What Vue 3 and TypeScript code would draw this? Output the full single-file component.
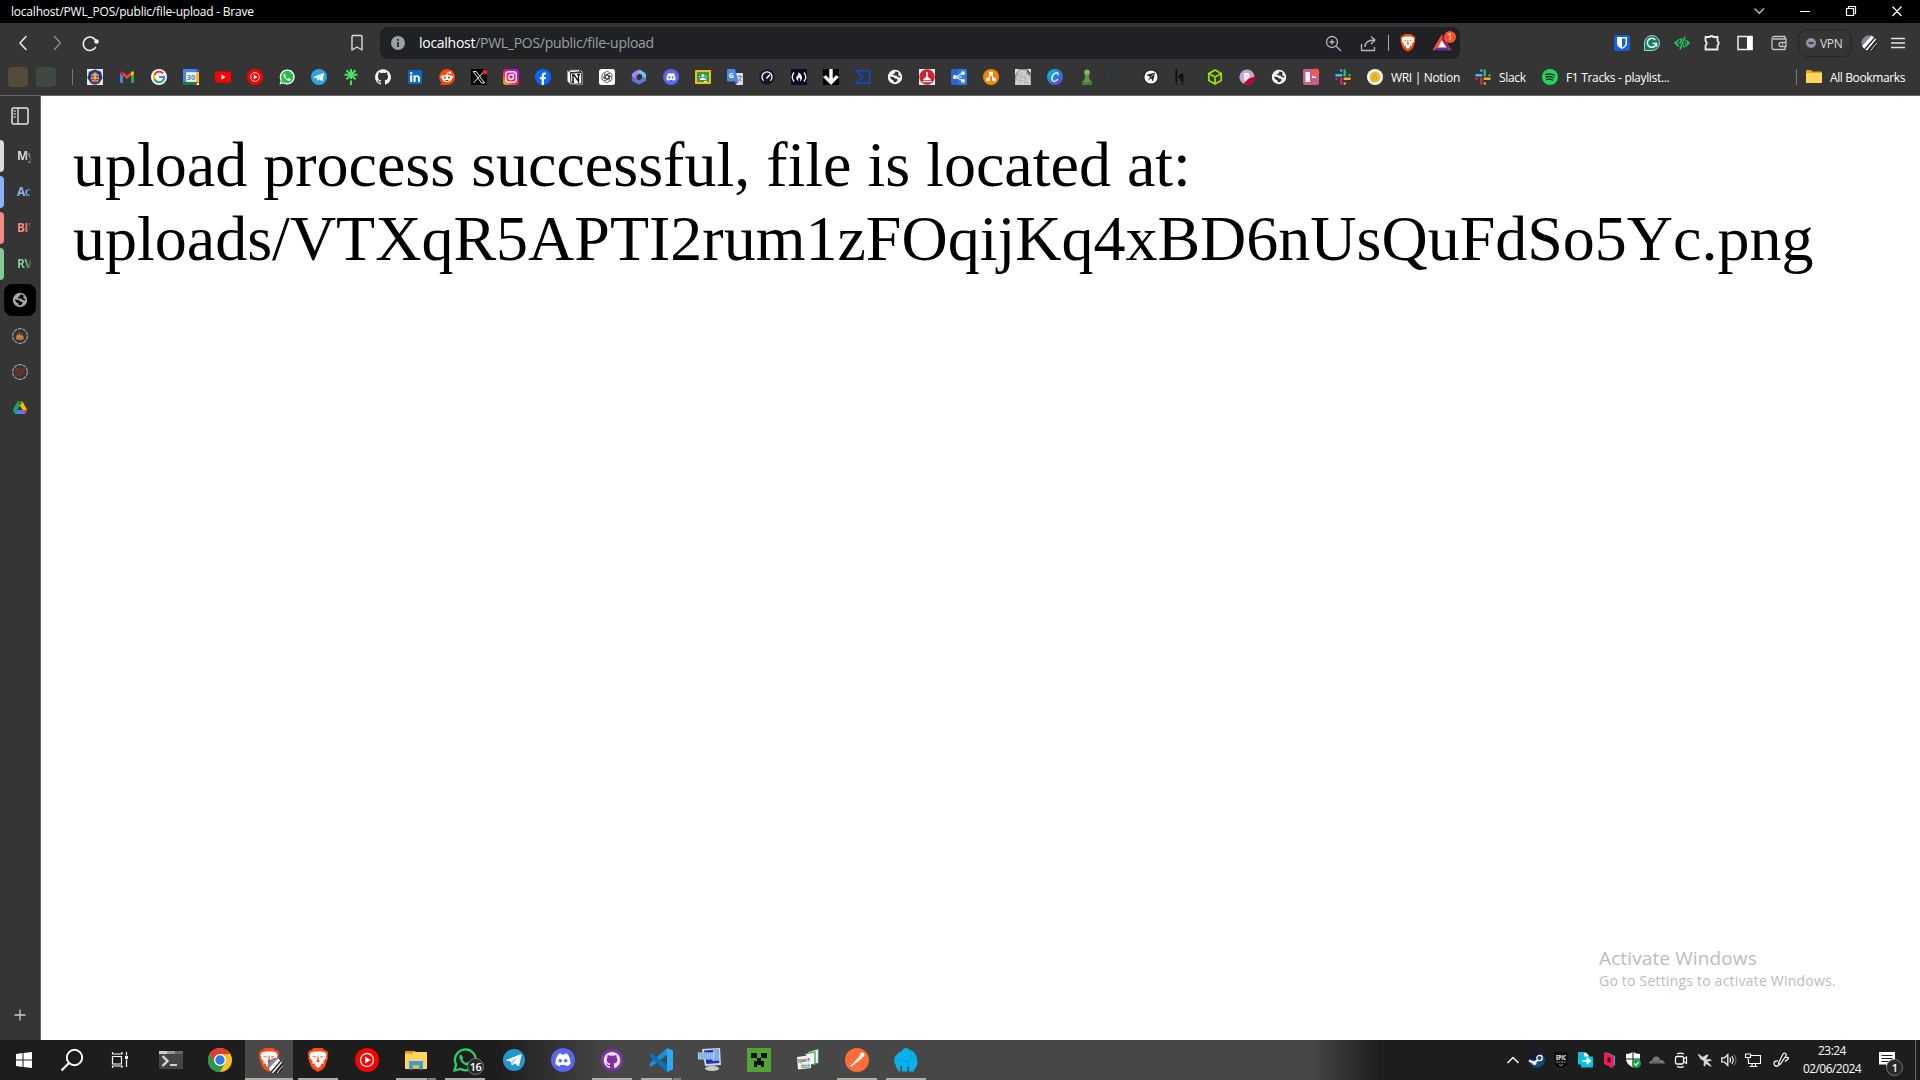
<script setup lang="ts">
interface Glyph { name: string; art: string; label?: string; width?: number }
interface App extends Glyph { state?: 'open' | 'active' | 'stacked'; badge?: string }

const lion = `<path d="M7.500 0h9L19 2.500l1.500-.3L22.300 5l-.8 3 .5 2-3 8.500-2 2.500-5 3-5-3-2-2.500L2 10l.5-2-.8-3 1.800-2.800L5 2.500Z" fill="#fb4a12"/><path d="M8.500 3.500h7l3.500.8 1.700 3-.8 1.200.4 1.300-3 3.700.5 2-3 .3.300 1.700-3.100 2.500-3.100-2.500.3-1.700-3-.3.5-2-3-3.700.4-1.300-.8-1.200 1.700-3Z" fill="#fff"/><path d="m5.800 8 4 .4-.5 1.300ZM18.200 8l-4 .4.500 1.300ZM11.600 7.500h.8l.3 4.500 1.300 1.200-2 1.300-2-1.300 1.300-1.200Z" fill="#fb4a12"/>`
const play = `<circle cx="12" cy="12" r="12" fill="#f00"/><circle cx="12" cy="12" r="6.500" fill="none" stroke="#fff" stroke-width="1.300"/><path d="M10 8.500 15.800 12 10 15.500Z" fill="#fff"/>`
const plane = `<path d="M4.500 11.800 18.500 6.200c.7-.2 1.100.2 1 .9L17.200 17.500c-.2.8-.7.9-1.200.6l-3.500-2.600-1.800 1.700c-.3.300-.8.200-.9-.2l-.9-3.300-4.300-1.100c-.6-.2-.6-.6-.1-.8Z" fill="#fff"/><path d="m9.500 13.500 7-5.300-5.400 6.200-.7 2.200Z" fill="#8cc6e6"/>`
const discord = `<path d="M8.300 6.500A14 14 0 0 1 10 6l.6 1a9 9 0 0 1 2.800 0L14 6q1 .1 1.900.5Q18.500 10.200 18.300 15q-1.800 1.500-3.500 1.800l-.9-1.300a8 8 0 0 1-3.800 0l-.9 1.300Q7.400 16.500 5.700 15 5.400 10.200 8.300 6.500Z" fill="#fff"/><circle cx="9.700" cy="12.200" r="1.500" fill="#5865f2"/><circle cx="14.300" cy="12.200" r="1.500" fill="#5865f2"/>`
const cat = `M8 .2a7.900 7.900 0 0 0-2.500 15.400c.4.1.5-.2.500-.4v-1.500c-2.200.5-2.700-1-2.700-1-.4-.9-.9-1.200-.9-1.200-.7-.5.100-.5.100-.5.800.1 1.200.8 1.200.8.700 1.200 1.900.9 2.300.7 0-.5.300-.9.500-1.100-1.800-.2-3.600-.9-3.600-4 0-.9.300-1.600.8-2.100-.1-.2-.4-1 .1-2.100 0 0 .7-.2 2.200.8a7.500 7.500 0 0 1 4 0c1.500-1 2.200-.8 2.200-.8.400 1.100.2 1.900.1 2.100.5.500.8 1.200.8 2.100 0 3.100-1.900 3.700-3.600 3.900.3.300.5.700.5 1.500v2.400c0 .2.100.5.500.4A7.900 7.900 0 0 0 8 .2Z`
const phone = `<path d="M5.500 4.400c-.7.300-1.300 1.200-1 2.400.6 2.300 2.700 4.300 4.900 4.900 1.200.2 2.200-.4 2.300-1.500L9.600 9.100l-.9.900c-1.100-.4-2.200-1.400-2.700-2.600l.8-.9Z" fill="#fff"/>`
const globe = (c: string, d: string) => `<circle cx="8" cy="8" r="7.200" fill="${c}"/><path d="M8.300 2.500c1.800 0 3 .6 4 1.700L11 4.800l.6 1.600 1.900.9v1.200L10.700 8 9.200 6.400H6.800L5.500 5.200l2.200-.7ZM2.600 7.500l3.900.4 1.700 1.700 2.300.4-.3 2-1.600 1.300H6.700l-.2-1.900-2-1Z" fill="${d}"/>`
const hash = `<g stroke-linecap="round" stroke-width="2.500" fill="none"><path d="M6.200 1.500v0M1.500 6.200h4.700" stroke="#36c5f0"/><path d="M9.700 1.500v4.700M14.500 6.200v0" stroke="#2eb67d"/><path d="M14.500 9.700H9.700M9.700 14.500v0" stroke="#ecb22e"/><path d="M6.200 14.500V9.700M1.500 9.700v0" stroke="#e01e5a"/></g>`
const stripes = `<circle cx="12" cy="12" r="11.700" fill="#19191b"/><path d="M.5 11A11.700 11.700 0 0 1 15 .7L1.500 16.500Z" fill="#85879b"/><path d="M1.500 16.500 15.500.9 20 3.500 4.800 21Z" fill="#fff"/><path d="M6.500 22.300 21.300 5l1.300 2L9.200 23.200ZM12.200 23.600 23.500 10l.2 2.800L15.500 23Z" fill="#fff"/><path d="m12.500 24 11-13.500" stroke="#19191b" stroke-width="1.400"/>`

const marks: Glyph[] = [
  { name: 'campus', art: `<path d="M0 0h16v16H0z" fill="#e8e8ec"/><path d="m8 .5 6 2.300L15.600 9 12 14.500 8 15.800 4 14.500.4 9 2 2.800Z" fill="#1f3d80"/><path d="M8 3 12 6v5l-1.500 2h-5L4 11V6Z" fill="#d9924a"/><path d="M4 7.500h8M4.500 10.500h7" stroke="#7a4560"/><path d="M7 4.500h2v6H7z" fill="#eeb03a"/><path d="M5 12h6v1.500H5z" fill="#c95a3a"/>` },
  { name: 'mail', art: `<path d="M1 3.500 4 6v8H2a1 1 0 0 1-1-1Z" fill="#4285f4"/><path d="M15 3.500 12 6v8h2a1 1 0 0 0 1-1Z" fill="#34a853"/><path d="M4 6.500V3.200l4 3 4-3v3.300L8 10Z" fill="#ea4335"/><path d="M1 4c0-1.800 1.500-2.300 3-1v3.700L1 5Z" fill="#c5221f"/><path d="M15 4c0-1.800-1.500-2.300-3-1v3.700L15 5Z" fill="#fbbc04"/>` },
  { name: 'search', art: `<circle cx="8" cy="8" r="8" fill="#fff"/><g fill="none" stroke-width="2.200"><path d="M12 4.400A5.100 5.100 0 0 0 3.400 6" stroke="#ea4335"/><path d="M3.400 6a5 5 0 0 0 0 4" stroke="#fbbc05"/><path d="M3.400 10A5.100 5.100 0 0 0 11.600 11.900" stroke="#34a853"/><path d="M11.600 11.900A5 5 0 0 0 13.100 8H8" stroke="#4285f4"/></g>` },
  { name: 'calendar', art: `<path d="M0 0h16v16H0z" fill="#fff"/><path d="M0 0h13v3.200H3.200V13H0Z" fill="#4285f4"/><path d="M13 0h3v3.200h-3Z" fill="#1967d2"/><path d="M12.800 3.200H16V13h-3.200Z" fill="#fbbc04"/><path d="M0 12.800h13V16H0Z" fill="#188038"/><path d="M13 13h3l-3 3Z" fill="#ea4335"/><text x="8" y="10.600" text-anchor="middle" font-size="7.500" font-weight="700" fill="#3f7de0">30</text>` },
  { name: 'video', art: `<rect y="2.500" width="16" height="11.200" rx="2.600" fill="#f00"/><path d="M6.500 5.600v5L10.700 8Z" fill="#fff"/>` },
  { name: 'music', art: `<g transform="scale(.6667)">${play}</g>` },
  { name: 'chat', art: `<path d="M.5 15.500 1.600 11.400A7.500 7.500 0 1 1 4.500 14.400Z" fill="#fff"/><path d="m2 14 .8-3A6.200 6.200 0 1 1 5 13.200Z" fill="#1fc142"/>${phone}` },
  { name: 'telegram', art: `<circle cx="8" cy="8" r="8" fill="#2fa3dc"/><g transform="scale(.6667)">${plane}</g>` },
  { name: 'linktree', art: `<path d="M8 0v10M1.500 5.800h13M3.500 1.300l9 9M12.500 1.300l-9 9M8 11.500V16" stroke="#43e660" stroke-width="2"/>` },
  { name: 'github', art: `<path d="${cat}" fill="#fff"/>` },
  { name: 'linkedin', art: `<rect x="1" y="1" width="14" height="14" rx="1" fill="#0a66c2"/><path d="M3.200 6.300h2V13h-2ZM6.500 6.300h2v1c1-1.700 4.400-1.600 4.400 1.700V13h-2V9.300c0-1.900-2.300-1.700-2.300 0V13h-2.100Z" fill="#fff"/><circle cx="4.200" cy="4.200" r="1.200" fill="#fff"/>` },
  { name: 'reddit', art: `<path d="M8 0a8 8 0 0 1 0 16H.8l2-2.200A8 8 0 0 1 8 0Z" fill="#ff4500"/><ellipse cx="8" cy="9.300" rx="5" ry="3.700" fill="#fff"/><circle cx="3.200" cy="7.800" r="1.500" fill="#fff"/><circle cx="12.800" cy="7.800" r="1.500" fill="#fff"/><circle cx="11" cy="3.800" r="1.300" fill="#fff"/><path d="M8 6 8.500 3.200 11 3.800" stroke="#fff" fill="none" stroke-width=".7"/><circle cx="6" cy="8.700" r="1.100" fill="#e6411b"/><circle cx="10" cy="8.700" r="1.100" fill="#e6411b"/><path d="M6 11h4q-2 1.800-4 0" fill="#333"/>` },
  { name: 'x', art: `<path d="M0 0h16v16H0z"/><path d="M2.200 2.500h3L13.500 14h-3ZM13 2.500 2.500 14" stroke="#eee" stroke-width="1" fill="none"/><circle cx="14" cy="3" r="2.400" fill="#f1202c"/>` },
  { name: 'instagram', art: `<defs><linearGradient id="ig" x1="0" y1="1" x2=".8" y2="0"><stop stop-color="#ffc600"/><stop offset=".4" stop-color="#ff2a49"/><stop offset=".75" stop-color="#e600b5"/><stop offset="1" stop-color="#a91be8"/></linearGradient></defs><rect width="16" height="16" rx="3.500" fill="url(#ig)"/><rect x="2.700" y="2.700" width="10.600" height="10.600" rx="3" fill="none" stroke="#fff" stroke-width="1.400"/><circle cx="8" cy="8" r="2.500" fill="none" stroke="#fff" stroke-width="1.400"/><circle cx="11" cy="5" r=".8" fill="#fff"/>` },
  { name: 'facebook', art: `<circle cx="8" cy="8" r="8" fill="#0866ff"/><path d="M6.700 15.900V10.300H4.900V7.900h1.800V6.700c0-2.700 1.400-3.500 4.100-3v2c-1.400-.1-1.900 0-1.900 1.200v1h2l-.4 2.400H8.900v5.600Z" fill="#fff"/>` },
  { name: 'notion', art: `<path d="M.5 1 11.500 0 15.500 3v12.500L4 16 .5 12Z" fill="#fff"/><path d="M.7 1.200 11.300.5 14 2.800 3.500 3.600ZM3.500 4.200 14.700 3.500v11.200L4 15.300Z" fill="#fff" stroke="#111" stroke-width=".9"/><path d="M6 13V6.200h1.200l4.300 6.200V5.600M5 6h2.500M10.200 5.500H13M5 13.200h2" fill="none" stroke="#111" stroke-width="1.400"/>` },
  { name: 'gpt', art: `<rect width="16" height="16" rx="2.500" fill="#fff"/><g fill="none" stroke="#333" stroke-width=".75"><path id="petal" d="M8 5.800 5.700 7.200V4.600Q6 2.500 8 2.500q1.700 0 2.500 1.300M8 5.800l3.200 1.900"/><path d="M8 5.800 5.700 7.200V4.600Q6 2.500 8 2.500q1.700 0 2.500 1.300M8 5.800l3.200 1.900" transform="rotate(60 8 8)"/><path d="M8 5.800 5.700 7.200V4.600Q6 2.500 8 2.500q1.700 0 2.500 1.300M8 5.800l3.200 1.900" transform="rotate(120 8 8)"/><path d="M8 5.800 5.700 7.200V4.600Q6 2.500 8 2.500q1.700 0 2.500 1.300M8 5.800l3.200 1.900" transform="rotate(180 8 8)"/><path d="M8 5.800 5.700 7.200V4.600Q6 2.500 8 2.500q1.700 0 2.500 1.300M8 5.800l3.200 1.900" transform="rotate(240 8 8)"/><path d="M8 5.800 5.700 7.200V4.600Q6 2.500 8 2.500q1.700 0 2.500 1.300M8 5.800l3.200 1.900" transform="rotate(300 8 8)"/></g>` },
  { name: 'office', art: `<path d="M8.500.5 3.500 2.500Q1 4 .9 6v6l4.600-2V6.500L9 4.500Z" fill="#a884e6"/><path d="m8.500.5 5 3Q15 4.500 15 6v5.500l-4-2V6L7.500 4Z" fill="#6bc9f0"/><path d="M15 9.500v2.300L8 15.500 1 12l4.500-2L8 11.200 11 9.500V7Z" fill="#5b78d6"/><path d="M.9 7v5l4.600-2Z" fill="#7b5bcf"/>` },
  { name: 'discord', art: `<circle cx="8" cy="8" r="8" fill="#5865f2"/><g transform="translate(-.8 -.5) scale(.73)">${discord}</g>` },
  { name: 'classroom', art: `<rect y="1" width="16" height="14" rx="1" fill="#fbbc04"/><path d="M2 3h12v10H2z" fill="#2b9a55"/><circle cx="8" cy="6.500" r="1.600" fill="#fff"/><path d="M4.500 11c.5-3 6.500-3 7 0Z" fill="#fff"/><circle cx="4.700" cy="7.700" r=".9" fill="#8ccba4"/><circle cx="11.300" cy="7.700" r=".9" fill="#8ccba4"/><path d="M9 12h3v1H9z" fill="#fff"/>` },
  { name: 'translate', art: `<path d="M7 4h8a1 1 0 0 1 1 1v10a1 1 0 0 1-1 1H9Z" fill="#dfe1e5"/><path d="M0 1a1 1 0 0 1 1-1h7l3.500 12.500H1a1 1 0 0 1-1-1Z" fill="#4688f1"/><path d="m8 12.500 3.500 0L8.700 16Z" fill="#3367d6"/><path d="M10.500 7.500h5M13 6v1.500M14.500 7.500q-.8 3-3.500 5M11.500 9q1 2.200 3.500 3.500" stroke="#777" fill="none" stroke-width=".8"/><text x="1.800" y="8.800" font-size="7" font-weight="700" fill="#fff">G</text>` },
  { name: 'speed', art: `<circle cx="8" cy="8" r="7.700" fill="#15162d"/><path d="M4.700 11.700a5 5 0 1 1 6.600 0" stroke="#fff" stroke-width="1.300" fill="none"/><path d="m7.500 9.500 3.300-3.800" stroke="#fff" stroke-width="1.600"/>` },
  { name: 'camp', art: `<path d="M0 0h16v16H0z" fill="#0a0a23"/><path d="M3 3.500Q-.5 8 3 12.500M13 3.500Q16.500 8 13 12.500" stroke="#fff" stroke-width="1.300" fill="none"/><path d="M7.300 3q4 2.800 3.700 6.500-.2 2-2 2.800 1.200-2-.7-3.800-1.300 1-1.200 2.300 0 .8.700 1.500Q5 11.300 5.200 9q.2-1.500 1.600-2.800Q8 4.800 7.300 3Z" fill="#fff"/>` },
  { name: 'download', art: `<path d="M0 0h16v16H0z"/><path d="M6.300 0h3.400v9.700L13 6.200 16 8 8 16 0 8l3-1.800 3.300 3.500Z" fill="#fff"/>` },
  { name: 'total', art: `<path d="M1.300 1.700h13.500v12.600H1.300L7.700 8Z" fill="none" stroke="#0b4dda" stroke-width="1.400"/>` },
  { name: 'web', art: globe('#fff', '#353535') },
  { name: 'stamp', art: `<path d="M0 0h16v16H0z" fill="#d2f1ef"/><circle cx="8" cy="8" r="7.700" fill="#cf2430"/><path d="M7.200 3h1.600v5l3 2.200v1H4.200v-1l3-2.200ZM3.500 12h9v1.200h-9Z" fill="#fff"/>` },
  { name: 'share', art: `<rect width="16" height="16" rx="2" fill="#2965d9"/><rect x="7" width="9" height="16" rx="2" fill="#2e7be8"/><path d="m3.800 8 8-3.800M3.800 8l8 3.800M4 8h7" stroke="#fff" fill="none"/><circle cx="3.800" cy="8" r="1.900" fill="#fff"/><circle cx="12" cy="4.200" r="1.900" fill="#fff"/><circle cx="12" cy="11.800" r="1.900" fill="#fff"/>` },
  { name: 'drawio', art: `<circle cx="8" cy="8" r="8" fill="#f08705"/><path d="m8 5-3 5M8 5l3 5" stroke="#fff" stroke-width="1.300"/><path d="M6 2.800h4v3.400H6zM3.200 9h3.600v3.200H3.200zM9.200 9h3.600v3.200H9.200z" fill="#fff"/>` },
  { name: 'paper', art: `<path d="M0 0h16v16H0z" fill="#8a8a8a"/><path d="M4 1 12 1.500 11 4.500l4 3 1 8.500H0L1 8Z" fill="#cfcfcf"/><path d="m1 10 4-8M4 15l3-12M10 15V5M1 6l12 4M0 10l14 4" stroke="#a9a9a9" stroke-width=".8"/><path d="m12 0 4 4V0ZM0 0h4L0 6Z" fill="#e0e0e0"/><path d="m12 1 3 4" stroke="#333"/>` },
  { name: 'canva', art: `<defs><linearGradient id="cv" x2="1" y2="1"><stop stop-color="#00c4cc"/><stop offset=".35" stop-color="#149bd5"/><stop offset="1" stop-color="#7d2ae8"/></linearGradient></defs><circle cx="8" cy="8" r="8" fill="url(#cv)"/><path d="M10.800 6.300c1-2.300-.5-3.200-2.200-2.500C5.400 5 3.700 10.500 6 12c1.500.9 3.800-.3 4.800-2" fill="none" stroke="#fff" stroke-width="1.300"/>` },
  { name: 'chess', art: `<circle cx="8" cy="3.200" r="2.800" fill="#85b85c"/><path d="M4.800 5.600h6.400L9.800 7.500q.3 3.500 3 5.300V16H3.200v-3.200q2.700-1.800 3-5.300Z" fill="#5d9948"/><path d="M3 13h10v3H3z" fill="#467f37"/>` },
  { name: 'console', art: `<path d="M10 4V1.200H.8v13.600H10V12" fill="none" stroke="#183b55"/><text x="2.500" y="11.500" font-size="10" fill="#183b55">c</text><path d="M12 14.500h4" stroke="#183b55"/>` },
  { name: 'flight', art: `<circle cx="8" cy="8" r="7.600" fill="#171717"/><circle cx="8" cy="8" r="6.600" fill="#fff"/><path d="M3.300 5.800 12 3.800 9.800 12.700 8.200 9.200 4.700 11.800 7.300 8Z" fill="#222"/><path d="m7.800 8 3-3" stroke="#fff" stroke-width=".7"/>` },
  { name: 'hacker', art: `<path d="M.5 0h1.600v13H.5zM.5 14.500h2v1h-2zM6.500 14.500h2v1h-2z" fill="#0a0a0a"/><path d="M4 8q2-2.500 3.300-2.500V13M4 9h1.500" fill="none" stroke="#0a0a0a" stroke-width="2"/>` },
  { name: 'cube', art: `<path d="m8 1 6.200 3.500v7L8 15 1.800 11.500v-7ZM1.800 4.500 8 8l6.200-3.500M8 8v7" fill="none" stroke="#96e600" stroke-width="1.700"/>` },
  { name: 'pico', art: `<circle cx="8" cy="8" r="7.600" fill="#c9a6cd"/><path d="M15.600 7.500A7.600 7.600 0 0 1 4.500 14.800L10 9.500Z" fill="#c5012a"/><text x="4.500" y="11.800" font-size="10" font-weight="800" fill="#fff">P</text>` },
  { name: 'web2', art: globe('#fff', '#353535') },
  { name: 'board', art: `<rect width="16" height="16" rx="2" fill="#cf5a91"/><path d="M2.500 3h4.500v10H2.500zM9 3h4v6H9z" fill="#fff"/><circle cx="12.300" cy="3.700" r="3.700" fill="#f15b42" stroke="#cf5a91" stroke-width=".8"/>` },
  { name: 'slack', art: hash },
  { name: 'wri', label: 'WRI | Notion', width: 68, art: `<circle cx="8" cy="8" r="8" fill="#fff"/><circle cx="8" cy="8" r="5.500" fill="#f0b932"/><path d="m5.800 10.500 2.200-5 2.200 5" stroke="#dda129" fill="none" stroke-width="1.200"/>` },
  { name: 'slack2', label: 'Slack', width: 27, art: hash },
  { name: 'spotify', label: 'F1 Tracks - playlist...', width: 106, art: `<circle cx="8" cy="8" r="8" fill="#1ed760"/><path d="M3 5.500q5.500-1.500 10 1M3.600 8q4.500-1.200 8.600 1M4 10.500q4-1 7.200.8" stroke="#222" stroke-width="1.400" fill="none"/>` },
]

const extensions: Glyph[] = [
  { name: 'vault', art: `<rect width="16" height="16" rx="2" fill="#175ddc"/><path d="M3 2h10v6.500q0 3-5 5.500-5-2.500-5-5.500Z" fill="#fff"/><path d="M8 3.500h3.500v5q0 2-3.500 4Z" fill="#175ddc"/>` },
  { name: 'grammar', art: `<path d="M8 .5A7.500 7.500 0 0 1 15.500 8v7.500H8A7.500 7.500 0 0 1 8 .5Z" fill="#0d7f66" stroke="#b7c6c1" transform="matrix(-1 0 0 1 16 0)"/><path d="M11.300 4.900A4.500 4.500 0 1 0 12.300 8.500H8.500M12.500 8v3.500" fill="none" stroke="#fff" stroke-width="1.500"/>` },
  { name: 'eye', art: `<path d="M0 8Q8-1 16 8 8 17 0 8Z" fill="#1fd15c"/><path d="M3 8q1-2.500 3-3-2 3 0 6-2-.8-3-3m10 0q-1-2.500-3-3 2 3 0 6 2-.8 3-3" stroke="#353535" stroke-width="1" fill="none"/><path d="M5.800 15 11.200 1" stroke="#353535" stroke-width="3"/><path d="M6 14.500 11 1.500" stroke="#1fd15c" stroke-width="1.400"/>` },
  { name: 'puzzle', art: `<path d="M1.500 2h4q2-2 4 0h4v4q2.500 2 0 4.500v4h-12v-4q2.500-2.300 0-4.500Z" fill="none" stroke="#eee" stroke-width="1.800"/>` },
  { name: 'panel', art: `<rect x="1" y="1.500" width="14" height="13" fill="none" stroke="#eee" stroke-width="1.500"/><path d="M10 1h5.500v14H10z" fill="#fff"/>` },
  { name: 'wallet', art: `<path d="M14 4V1.500H2.500Q1 2 1 4v8.500q0 2 2 2h11V12M2 4h13v3.500H10q-2 0-2 2t2 2h5V7.500M11 9.500h1" fill="none" stroke="#c4c4c4" stroke-width="1.300"/>` },
]

const apps: App[] = [
  { name: 'terminal', art: `<path d="M0 3h24v18H0z" fill="#444"/><path d="M0 3h8v3H0z" fill="#ccc"/><path d="M8 3h8v3H8z" fill="#999"/><path d="M16 3h8v3h-8z" fill="#666"/><path d="m3.500 8 5 5-5 5" stroke="#d8d8d8" stroke-width="2.400" fill="none"/><path d="M11 17h7" stroke="#fff" stroke-width="1.500"/>` },
  { name: 'chrome', art: `<circle cx="12" cy="12" r="12" fill="#fbc116"/><path d="M1.600 6A12 12 0 0 1 22.400 6H12L7 15Z" fill="#e33b2e"/><path d="M1.600 6A12 12 0 0 0 12 24L17 15H7Z" fill="#279847"/><circle cx="12" cy="12" r="6" fill="#fff"/><circle cx="12" cy="12" r="4.700" fill="#2b7de9"/>` },
  { name: 'brave-profile', state: 'active', art: `${lion}<g transform="translate(10.500 10) scale(.65)">${stripes}</g>` },
  { name: 'brave', state: 'open', art: lion },
  { name: 'ytmusic', art: play },
  { name: 'explorer', state: 'stacked', art: `<path d="M1 3h9l2 1h11v17H1Z" fill="#ffd35c"/><path d="M1 3h9l-1.500 2.500H1Z" fill="#dd9714"/><path d="M5 13h14v8.500h-4V17H9v4.500H5Z" fill="#3b9be0"/><path d="M9 17h6v4H9z" fill="#f3b62c"/>` },
  { name: 'whatsapp', state: 'open', badge: '16', art: `<path d="m1.500 22.500 1.600-6A10.400 10.400 0 1 1 7.500 21Z" fill="none" stroke="#25d366" stroke-width="2.300"/><path d="M8 6.500c-1.200.5-2 2-1.500 3.800 1 3.600 4 6.500 7.400 7.400 1.700.4 3.300-.5 3.600-2.200l-3-1.800-1.300 1.300c-1.700-.7-3.300-2.200-4-4L10.400 9.700Z" fill="#25d366"/>` },
  { name: 'telegram', art: `<circle cx="12" cy="12" r="11" fill="#2396cf"/>${plane}` },
  { name: 'discord', art: `<circle cx="12" cy="12" r="12" fill="#5865f2"/><g transform="translate(-2.300 -1.800) scale(1.190)">${discord}</g>` },
  { name: 'github', state: 'open', art: `<circle cx="12" cy="12" r="11" fill="#8331a7"/><g transform="translate(3.700 3.700) scale(1.040)"><path d="${cat}" fill="#f1e9f5"/></g>` },
  { name: 'vscode', state: 'stacked', art: `<path d="M18 0 1.500 14.500 0 17l2 2L18 7Z" fill="#1f8dd6"/><path d="M18 24 1.500 9.500 0 7l2-2 16 12Z" fill="#0873bd"/><path d="M18 0 24 2.500v19L18 24Z" fill="#2aa9f3"/>` },
  { name: 'rdp', art: `<path d="M4 1 22 0 23 17 7 18Z" fill="#d9d9d2"/><path d="M6 2.500 20.500 1.500 21.300 15 8.500 16Z" fill="#1a32c4"/><path d="m15 2 5.500-.5.800 11-7 .8Z" fill="#86acf3"/><path d="M0 4.500h16v7H0z" fill="#b5dcf5"/><path d="M1 6h14M1 8h14M1 10h14" stroke="#3279bd" stroke-dasharray="1.500 .7"/><path d="M12 17.500h5l1 2h-6z" fill="#aaa"/><ellipse cx="14" cy="20.500" rx="7" ry="2.500" fill="#c9c9c9"/>` },
  { name: 'minecraft', art: `<path d="M0 0h24v24H0z" fill="#52a535"/><path d="M4 5h6v5H4zM14 5h6v5h-6zM10 10h4v3h3v6h-3v-2h-4v2H7v-6h3z" fill="#0b0e09"/>` },
  { name: 'spacedesk', art: `<path d="m12 4 10.500-3v14L14 17" fill="#fff" stroke="#389447" stroke-width="1.200"/><path d="m9 6 10-2v13" fill="#fff" stroke="#389447" stroke-width="1.200"/><path d="M1 9 15 7v13L2 21.500Z" fill="#f4f4f4"/><text x="2" y="14.500" font-size="5.500" font-weight="700" fill="#555" textLength="12" lengthAdjust="spacingAndGlyphs" transform="rotate(-6 2 14)">space</text><text x="5" y="20" font-size="5.500" font-weight="700" fill="#2c9b48" textLength="9" lengthAdjust="spacingAndGlyphs" transform="rotate(-4 5 19)">desk</text>` },
  { name: 'postman', state: 'open', art: `<circle cx="12" cy="12" r="12" fill="#ff6c37"/><path d="M6 18.500 16 7.500" stroke="#fff" stroke-width="1.200"/><path d="m9 15 7-7 1.500 2-7 5.500ZM4.500 18.500 9 15l1 1.500Z" fill="#fff"/><circle cx="17.200" cy="6.800" r="2.300" fill="#fff"/>` },
  { name: 'mamp', state: 'open', art: `<path d="M8 3q1-3 4-3 2.500 0 3.500 2.300 3.500 0 5.500 3.200 2.500 3.500 2.500 8 0 5-3 7.500l-.5 2.500h-5v-5h-1.500v5H8v-5l-1.500-1v6H5q-3-3-3.500-7Q-.5 15 .5 11 0 8.500 3.500 6 5 3.500 8 3Z" fill="#08b1ec"/><path d="M7.500 10q3 5 6.500 3.500 4-2 3.500-7M2.500 12.500q1.500 1 3 .5" fill="none" stroke="#078fc8" stroke-width=".8"/>` },
]

const tray: Glyph[] = [
  { name: 'more', art: `<path d="m2.500 11 5.500-5.500 5.500 5.500" stroke="#fff" stroke-width="1.400" fill="none"/>` },
  { name: 'steam', art: `<circle cx="8" cy="8" r="7.800" fill="#164b82"/><path d="M0 7a8 8 0 0 1 8-7 8 8 0 0 1 4 1L6 8Z" fill="#0d1b36"/><path d="M0 8.500 5 11l4.500-3.500" stroke="#fff" stroke-width="2.200" fill="none"/><circle cx="10.500" cy="6" r="2.700" fill="#26466c" stroke="#fff" stroke-width="1.200"/><circle cx="5.500" cy="11" r="2" fill="#fff"/>` },
  { name: 'epic', art: `<path d="M1.500 0h13v13L8 16 1.500 13Z" fill="#080808"/><text x="8" y="7.500" font-size="6.500" font-weight="800" textLength="10" lengthAdjust="spacingAndGlyphs" text-anchor="middle" fill="#ddd">EPIC</text><path d="M3 10h10" stroke="#999" stroke-dasharray="2 .5"/><path d="m6 12.500 2 1 2-1" stroke="#999" fill="none"/>` },
  { name: 'transfer', art: `<path d="M1 .5h8l3 3V9H1Z" fill="#e9fcff"/><path d="M3 .5h4v12H1v-12Z" fill="#17b9dd"/><rect x="4" y="4.500" width="12" height="11" rx="1" fill="#00c5e6"/><path d="M5.500 9h7M9.500 6l3.500 3-3.500 3" stroke="#fff" stroke-width="1.800" fill="none"/>` },
  { name: 'parsec', art: `<path d="M5 0 14 4v9l-5 3Z" fill="#1badd1"/><path d="m3 0 9.500 4v12L3 12Z" fill="#ff1650"/><path d="m6.500 5 3 1.300V11l-3-1.300Z" fill="#1d1d1d"/>` },
  { name: 'defender', art: `<path d="M8 0q3 2 7 2v5q0 5-7 8.500Q1 12 1 7V2q4 0 7-2Z" fill="#fff"/><path d="M8 0v15M1 7h14" stroke="#1d1d1d"/><circle cx="11.500" cy="11.500" r="4.500" fill="#17a34a"/><path d="m9.200 11.500 1.700 1.700 3-3.300" stroke="#fff" stroke-width="1.300" fill="none"/>` },
  { name: 'cloud', art: `<path d="M0 11.500q0-2.500 3-2.800 1-4.700 5-4.200 2.500.3 3 3.500 4-.5 5 3.500Z" fill="#777"/><path d="M3 10h8" stroke="#555"/>` },
  { name: 'meet', art: `<rect x="2.500" y="4.500" width="8" height="7.500" rx="1.500" fill="none" stroke="#fff" stroke-width="1.300"/><path d="m10.500 7 3-2v6.500l-3-2M4 2q3.500-1.700 7 0M4 14.500q3.500 1.700 7 0" fill="none" stroke="#fff" stroke-width="1.200"/>` },
  { name: 'jet', art: `<path d="m.5 2 2 .5L5.500 5 10 2.500l1.500.5L9 7.500l4-.5 2 1.500-4.500 1L14.500 14l-1 .8-4.500-3-1 3-1.500-1.500.5-4L3.500 7Z" fill="#d6d6d6"/>` },
  { name: 'sound', art: `<path d="M.8 5.800h2.700L6.800 2.500v11L3.500 10H.8Z" fill="none" stroke="#fff" stroke-width="1.200"/><path d="M8.700 5.700q1.800 2.300 0 4.600M10.700 4q3.200 4 0 8" stroke="#fff" stroke-width="1.100" fill="none"/><path d="M13 2.500q4 5.500 0 11" stroke="#777" fill="none"/>` },
  { name: 'network', art: `<path d="M6 3.500h9.500v8H3.500v-4M7 11.500v3M4.500 14.500h8M10.500 11.500v3M.5 2h5v3.500h-5ZM3 5.500v2" fill="none" stroke="#fff" stroke-width="1.100"/>` },
]

const groups = [
  { text: 'My', color: '#dadce0' },
  { text: 'Ac', color: '#8ab4f8' },
  { text: "BI'", color: '#f28b82' },
  { text: 'RV', color: '#81c995' },
]
const filePath: string = 'uploads/VTXqR5APTI2rum1zFOqijKq4xBD6nUsQuFdSo5Yc.png'
</script>

<template>
  <div class="screen">
    <header class="titlebar">
      <span class="title">localhost/PWL_POS/public/file-upload - Brave</span>
      <svg class="winctl" viewBox="0 0 184 23"><g fill="none" stroke="#fff"><path d="m20.500 8.500 4.800 4.800 4.800-4.800" stroke="#bbb" stroke-width="1.300" /><path d="M66 11.500h10" /><path d="M112.500 8.500h7v7h-7zM114.500 8V6.500h7v7H120M158.500 6.500l9 9.500M167.500 6.500l-9 9.500" stroke-width="1.200" /></g></svg>
    </header>
    <div class="toolbar">
      <svg class="nav" viewBox="0 0 360 36"><g fill="none" stroke-linecap="round" stroke-linejoin="round"><path d="m26 13.500-6 6.500 6 6.500" stroke="#eee" stroke-width="1.500" /><path d="m54.500 13.500 6 6.500-6 6.500" stroke="#888" stroke-width="1.500" /><path d="M95.500 24.500a6.700 6.700 0 1 1 1-5" stroke="#eee" stroke-width="1.600" /><path d="M352 13.500q0-1 1-1h8q1 0 1 1v13.500l-5-3-5 3Z" stroke="#ddd" stroke-width="1.400" /></g><circle cx="96.500" cy="18.500" r="2.300" fill="#eee" /></svg>
      <div class="address">
        <svg class="info" viewBox="0 0 14 14"><circle cx="7" cy="7" r="7" fill="#9aa0a6" /><path d="M7 3v1.800M7 6v5" stroke="#202124" stroke-width="1.700" /></svg>
        <span class="url"><b>localhost</b>/PWL_POS/public/file-upload</span>
        <svg class="tools" viewBox="0 0 134 32"><g fill="none" stroke="#b5b8bc" stroke-width="1.300"><circle cx="12" cy="15" r="5.500" /><path d="m16 19 5 5M9.500 15h5M12 12.500v5M41.500 17v6.500h13V20M45 20q0-7 9.500-7M51 9.500l4 3.500-4 4" /></g><path d="M68.500 8v16" stroke="#aaa" /><g transform="translate(79 7) scale(.74)" v-html="lion"></g><path d="m122 8 9 15h-18Z" fill="#fff" /><path d="m122 7-9.500 16.500 5-2.500 4.500-8Z" fill="#ff4724" /><path d="m112.500 23.500 5-3h9l5 3Z" fill="#662d91" /><path d="m122 7 9.500 16.500-5-3-4.500-7Z" fill="#9e1f63" /></svg>
        <span class="alert">1</span>
      </div>
      <div class="extensions">
        <svg v-for="e in extensions" :key="e.name" class="ext" :class="e.name" viewBox="0 0 16 16" v-html="e.art"></svg>
        <div class="vpn"><i></i><span>VPN</span></div>
        <svg class="avatar" viewBox="0 0 24 24" v-html="stripes"></svg>
        <svg class="menu" viewBox="0 0 14 12"><path d="M0 1.500h14M0 6h14M0 10.500h14" stroke="#e3e3e3" stroke-width="1.400" /></svg>
      </div>
    </div>
    <nav class="bookmarks">
      <i class="chip sand"></i><i class="chip moss"></i><i class="rule"></i>
      <div v-for="m in marks" :key="m.name" class="mark">
        <svg viewBox="0 0 16 16" v-html="m.art"></svg>
        <span v-if="m.label" :style="{ width: m.width + 'px' }">{{ m.label }}</span>
      </div>
      <div class="all">
        <svg viewBox="0 0 16 16"><path d="M0 2q0-1 1-1h4l1.500 1.500H15q1 0 1 1V13q0 1-1 1H1q-1 0-1-1Z" fill="#e2a51d" /><path d="M0 4h16v9q0 1-1 1H1q-1 0-1-1Z" fill="#ffd65c" /></svg>
        <span>All Bookmarks</span>
      </div>
    </nav>

    <div class="body">
      <aside class="tabs">
        <svg class="toggle" viewBox="0 0 18 18"><rect x="1" y="1" width="16" height="16" rx="1.500" fill="none" stroke="#e6e6e6" stroke-width="1.500" /><path d="M7 1v16" stroke="#e6e6e6" stroke-width="1.300" /><path d="M2.500 4h2.500M2.500 7h2.500M2.500 10h2.500" stroke="#e6e6e6" stroke-width="1.200" /></svg>
        <div v-for="g in groups" :key="g.text" class="group" :style="{ color: g.color }"><i></i><b>{{ g.text }}</b></div>
        <div class="tab current"><svg viewBox="0 0 16 16" v-html="globe('#a3a8ae', '#000')"></svg></div>
        <div class="tab"><svg viewBox="0 0 16 16"><circle cx="8" cy="8" r="7.400" fill="none" stroke="#9da1a6" stroke-width="1.200" stroke-dasharray="3.800 .85" /><path d="M4 10q0-3 2-4v2l2-4v4l1.500-3v3l1-1q2 2 1 4l-1.500 1h-5Z" fill="#cf8426" /><path d="M5 11h6" stroke="#7a6785" /></svg></div>
        <div class="tab"><svg viewBox="0 0 16 16"><circle cx="8" cy="8" r="7.400" fill="none" stroke="#9da1a6" stroke-width="1.200" stroke-dasharray="3.800 .85" /><path d="m4 5 2-1 2 1.200v4L10 10l2-1.500V6l-1.500-1L9 6l3 1.500M4 5v4.500L8 12l2-2M4 5l2 1.200v3L8 8" stroke="#a12b31" stroke-width=".9" fill="none" /></svg></div>
        <div class="tab"><svg viewBox="0 0 16 16"><path d="M5.500 1.500.8 10l2.200 4L8 5.500Z" fill="#1fa463" /><path d="M5.500 1.500h5L15.200 10h-4.700Z" fill="#fbbc04" /><path d="M3 14h10l2.200-4H5.300Z" fill="#4285f4" /><path d="m10.500 10h4.700L13 14Z" fill="#ea4335" /><path d="M5.500 1.500h5L8 5.500Z" fill="#188038" /></svg></div>
        <svg class="plus" viewBox="0 0 12 12"><path d="M6 .5v11M.5 6h11" stroke="#ccc" stroke-width="1.300" /></svg>
      </aside>
      <main class="page">
        <p>upload process successful, file is located at:<br>{{ filePath }}</p>
        <div class="watermark"><div class="wm1">Activate Windows</div><div class="wm2">Go to Settings to activate Windows.</div></div>
      </main>
    </div>

    <footer class="taskbar">
      <svg class="system" viewBox="0 0 147 40"><path d="m16 14 6.500-1v6.500H16ZM23.500 12.900 32 12v7.500h-8.500ZM16 20.500h6.500V27L16 26ZM23.500 20.500H32V28l-8.500-1Z" fill="#fff" /><circle cx="74.500" cy="17.500" r="7.700" fill="none" stroke="#fff" stroke-width="1.900" /><path d="m69 23-7.500 7.500" stroke="#fff" stroke-width="2.300" /><path d="M112.500 16.500h9v7.500h-9zM112.500 12v2h9.500v-2M112.500 28v-2h9.500v2M126.500 12v3.500M126.500 19.500V27" fill="none" stroke="#fff" stroke-width="1.200" /><path d="M125 16h3v3h-3z" fill="#fff" /></svg>
      <div v-for="a in apps" :key="a.name" class="app" :class="a.state">
        <svg viewBox="0 0 24 24" v-html="a.art"></svg>
        <span v-if="a.badge" class="count">{{ a.badge }}</span>
      </div>
      <div class="tray">
        <svg v-for="t in tray" :key="t.name" viewBox="0 0 16 16" v-html="t.art"></svg>
        <svg class="pen" viewBox="0 0 16 16"><path d="M5.500 11 10 2q1.500-2 3 0 .5 1-.5 2.500L7.500 12q-2 1-2-1ZM5 9q-4-.5-4 2.500T5 14q1.500-.5 1-3M12.500 5.500q4-.5 2.500 1.500l-3 2.500" fill="none" stroke="#fff" stroke-width="1.200" /></svg>
        <div class="clock"><span>23:24</span><span>02/06/2024</span></div>
        <div class="notice"><svg viewBox="0 0 16 16"><path d="M0 0h16v12.500H9.500L7 15.500v-3H0Z" fill="#fff" /><path d="M2.500 3.500h11M2.500 6.500h11M2.500 9.500h7" stroke="#1d1d1d" /></svg><span class="count">1</span></div>
      </div>
    </footer>
  </div>
</template>

<style>
body { margin: 0; overflow: hidden; background: #fff; }
</style>

<style scoped>
.screen { width: 1920px; height: 1080px; display: flex; flex-direction: column; overflow: hidden; font-family: "Open Sans", "Noto Sans", sans-serif; font-size: 12px; color: #fff; }
.screen svg { display: block; flex: none; overflow: visible; }
.titlebar { height: 23px; background: #000; display: flex; justify-content: space-between; align-items: center; }
.title { margin-left: 11px; line-height: 23px; white-space: nowrap; letter-spacing: -.21px; }
.winctl { width: 184px; height: 23px; margin-right: 2px; }
.toolbar { height: 36px; background: #353535; display: flex; align-items: flex-end; }
.nav { width: 360px; height: 36px; margin-right: 20px; }
.address { position: relative; width: 1080px; height: 32px; border-radius: 8px; background: #202124; display: flex; align-items: center; flex: none; }
.info { width: 14px; height: 14px; margin-left: 11px; }
.url { margin-left: 14px; font-size: 14px; line-height: 30px; color: #9aa0a6; white-space: nowrap; letter-spacing: -.28px; flex: 1; }
.url b { font-weight: 400; color: #fff; }
.tools { width: 134px; height: 32px; margin-right: 6px; }
.alert { position: absolute; right: 4px; top: 4px; width: 12px; height: 12px; border-radius: 50%; background: #ff4f2a; font-size: 9px; line-height: 12px; text-align: center; }
.extensions { flex: 1; height: 32px; display: flex; align-items: center; padding-left: 154px; }
.ext { width: 16px; height: 16px; margin-right: 14px; }
.ext.puzzle { margin-right: 17px; }
.ext.panel { margin-right: 18px; }
.ext.wallet { margin-right: 11px; }
.vpn { box-sizing: border-box; width: 54px; height: 28px; border: 1px solid #262626; border-radius: 9px; display: flex; align-items: center; margin-right: 9px; flex: none; }
.vpn i { width: 6px; height: 2px; background: #353535; border: solid #8f93a6; border-width: 4px 2px; border-radius: 5px; margin-left: 7px; }
.vpn span { margin-left: 4px; color: #ddd; letter-spacing: -.3px; }
.avatar { width: 16px; height: 16px; margin-right: 14px; }
.menu { width: 14px; height: 12px; }
.bookmarks { height: 36px; background: #353535; border-bottom: 1px solid #666; display: flex; align-items: center; padding-left: 8px; }
.chip { width: 20px; height: 20px; border-radius: 4px; margin-right: 8px; flex: none; }
.sand { background: #554b38; }
.moss { background: #3e4a40; }
.rule { width: 1px; height: 16px; background: #777; margin: 0 14px 0 8px; flex: none; }
.mark { display: flex; align-items: center; margin-right: 16px; flex: none; }
.mark svg, .all svg { width: 16px; height: 16px; }
.mark span { margin-left: 8px; white-space: nowrap; letter-spacing: -.32px; }
.all { margin-left: auto; margin-right: 15px; height: 16px; border-left: 1px solid #777; padding-left: 9px; display: flex; align-items: center; flex: none; }
.all span { margin-left: 8px; width: 75px; white-space: nowrap; letter-spacing: -.38px; }
.body { flex: 1; min-height: 0; display: flex; color: #000; }
.tabs { width: 40px; background: #353535; border-right: 1px solid #666; display: flex; flex-direction: column; flex: none; }
.toggle { width: 18px; height: 18px; margin: 11px 0 15px 11px; }
.group { height: 32px; margin-bottom: 4px; display: flex; align-items: center; }
.group i { width: 4px; height: 32px; border-radius: 0 4px 4px 0; background: currentColor; }
.group b { width: 14px; margin: 0 0 2px 13px; overflow: hidden; white-space: nowrap; font-size: 12px; letter-spacing: -.5px; mask-image: linear-gradient(90deg, #000 60%, rgba(0, 0, 0, .2)); }
.tab { width: 32px; height: 32px; margin: 0 0 4px 4px; border-radius: 8px; display: flex; align-items: center; justify-content: center; }
.tab svg { width: 16px; height: 16px; }
.current { background: #000; }
.plus { width: 12px; height: 12px; margin: auto 0 19px 14px; }
.page { flex: 1; background: #fff; padding: 32px; display: flex; flex-direction: column; justify-content: space-between; }
.page p { margin: 0; font: 64px/74px "Liberation Serif", "Times New Roman", serif; white-space: nowrap; }
.watermark { width: 289px; margin-bottom: 18px; align-self: flex-end; color: #bcbcbc; white-space: nowrap; }
.wm1 { font-size: 19px; line-height: 26px; letter-spacing: .12px; }
.wm2 { font-size: 14px; line-height: 19px; letter-spacing: .21px; }
.taskbar { height: 40px; display: flex; background: linear-gradient(90deg, #1d1d1d 0, #1d1d1d 500px, #474747 610px, #474747 1310px, #1d1d1d 1380px); }
.system { width: 147px; height: 40px; }
.app { width: 48px; height: 40px; margin-right: 1px; position: relative; display: flex; align-items: center; justify-content: center; flex: none; }
.app:first-of-type { margin-left: 0; }
.app svg { width: 24px; height: 24px; }
.active { background: #494949; }
.app::after { content: ""; position: absolute; bottom: 0; height: 2px; left: 4px; right: 4px; }
.open::after { background: #b0aea8; }
.active::after { left: 0; right: 0; background: #b0aea8; }
.stacked::after { background: linear-gradient(90deg, #b0aea8 31px, #444 31px, #444 32px, #807f7b 32px); }
.count { position: absolute; left: 26px; top: 18px; box-sizing: border-box; width: 17px; height: 17px; border: 1px solid #777; border-radius: 50%; background: #292929; color: #fff; font-size: 11px; font-weight: 600; line-height: 15px; text-align: center; letter-spacing: -.6px; }
.tray { margin-left: auto; width: 415px; display: flex; align-items: center; position: relative; }
.tray svg { width: 16px; height: 16px; margin-right: 8px; }
.tray .pen { margin: 0 0 0 4px; }
.clock { width: 66px; margin-left: 10px; display: flex; flex-direction: column; align-items: center; line-height: 18px; letter-spacing: -.55px; white-space: nowrap; }
.notice { position: relative; margin-left: 14px; height: 40px; display: flex; align-items: center; padding-right: 12px; border-right: 1px solid #666; }
.notice .count { left: 7px; top: 19px; }
</style>
